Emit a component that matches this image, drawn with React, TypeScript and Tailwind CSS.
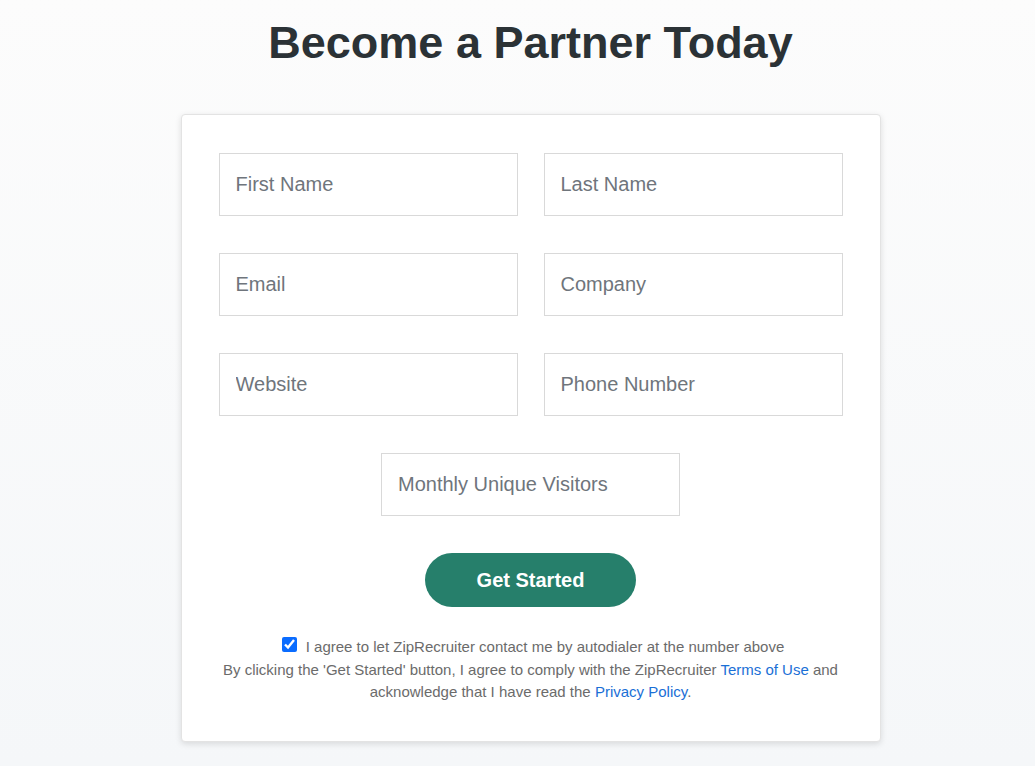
import React from 'react';

const fields: [string, string][] = [
  ['First Name', 'Last Name'],
  ['Email', 'Company'],
  ['Website', 'Phone Number'],
];

const inputClass =
  'w-[299px] h-[63px] border border-[#d9d9d9] bg-white px-[16px] text-[20px] text-[#333] placeholder:text-[#6f757c] outline-none';

export default function App() {
  return (
    <div
      className="min-h-[766px] w-full bg-gradient-to-b from-[#fcfcfc] to-[#f5f7f9] pl-[26px]"
      style={{ fontFamily: '"Liberation Sans", Arial, sans-serif' }}
    >
      <div className="flex flex-col items-center pt-[16px]">
        <h1 className="text-[45px] leading-[54px] font-bold text-[#2b3236]">Become a Partner Today</h1>

        {/* Form card */}
        <div className="mt-[44px] w-[700px] bg-white border border-[#e3e3e3] rounded-[4px] shadow-[0_2px_6px_rgba(0,0,0,0.12)] px-[37px] pt-[38px] pb-[37px]">
          <div className="flex flex-col gap-[37px]">
            {fields.map(([a, b]) => (
              <div key={a} className="flex justify-between">
                <input className={inputClass} placeholder={a} />
                <input className={inputClass} placeholder={b} />
              </div>
            ))}
            <div className="flex justify-center">
              <input className={inputClass} placeholder="Monthly Unique Visitors" />
            </div>
          </div>

          <div className="flex justify-center mt-[37px]">
            <button className="w-[211px] h-[54px] rounded-full bg-[#267f6b] text-white text-[20px] font-bold">
              Get Started
            </button>
          </div>

          <div className="mt-[29px] text-center text-[15px] leading-[22.5px] text-[#6b6b6b]">
            <div className="flex items-center justify-center gap-[9px] pl-[5px]">
              <input type="checkbox" defaultChecked className="w-[15px] h-[15px] accent-[#0a6cff] -mt-[6px]" />
              <span>I agree to let ZipRecruiter contact me by autodialer at the number above</span>
            </div>
            <p className="px-[3px]">
              By clicking the 'Get Started' button, I agree to comply with the ZipRecruiter{' '}
              <a className="text-[#1a6fd6]">Terms of Use</a> and acknowledge that I have read the{' '}
              <a className="text-[#1a6fd6]">Privacy Policy</a>.
            </p>
          </div>
        </div>
      </div>
    </div>
  );
}
